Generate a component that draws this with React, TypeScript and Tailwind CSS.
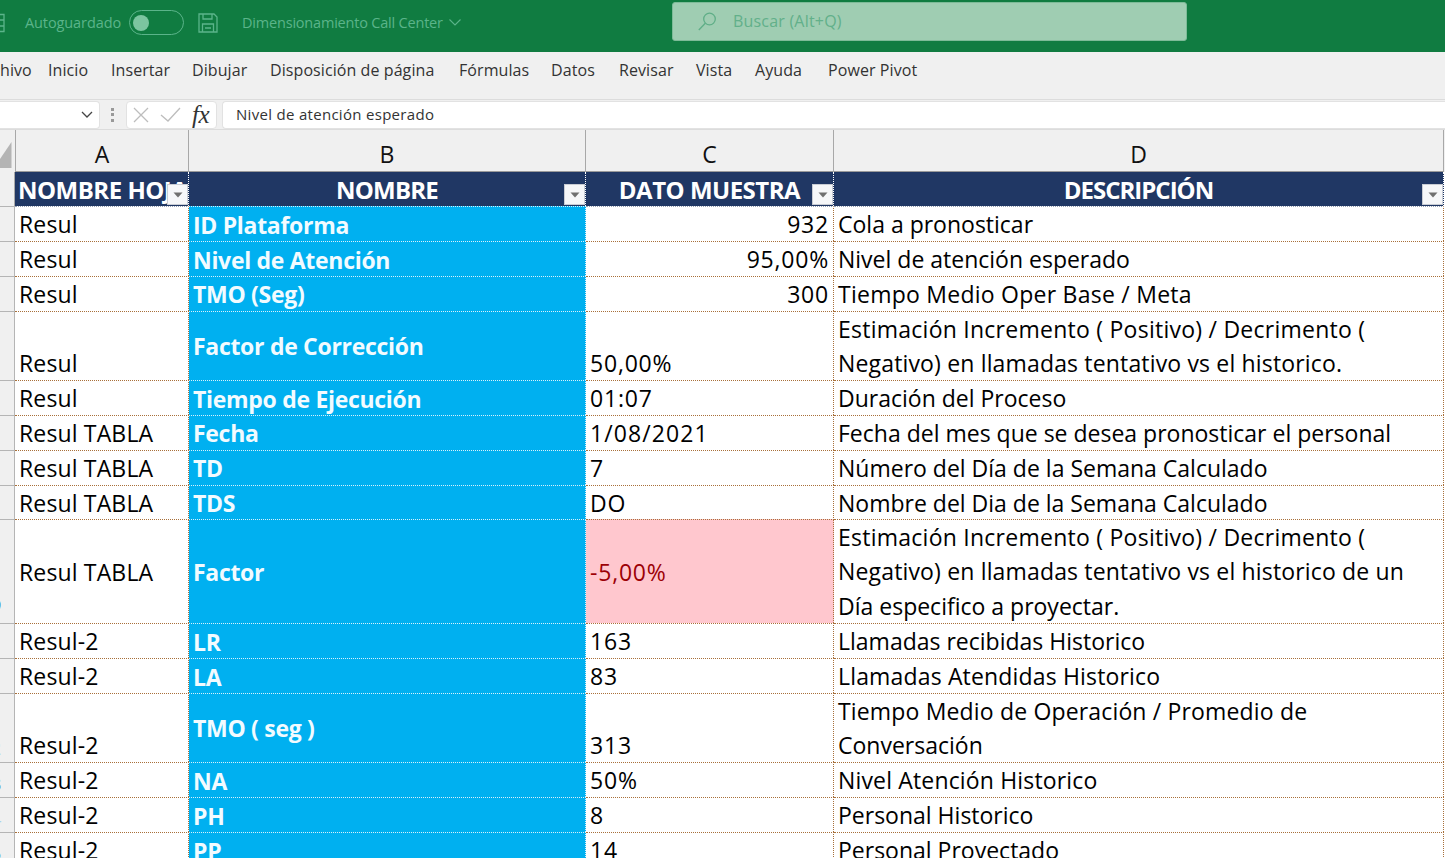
const CELL = "font-['Open_Sans',sans-serif] text-[23px] leading-[34px]";

type Line = [string, string?];
type Row = {
  h: string;
  a: string;
  aPos: string;
  b: string;
  bShift?: string;
  c: string;
  cPos: string;
  cTrack?: string;
  d: Line[];
  bg?: boolean;
  g?: string;
  gClass?: string;
};

const W1 = "tracking-[0.25px]";
const W2 = "tracking-[0.16px]";

const rows: Row[] = [
  { h: "h-[35px]", a: "Resul", aPos: "items-end", b: "ID Plataforma", c: "932", cPos: "items-end justify-end", d: [["Cola a pronosticar"]] },
  { h: "h-[35px]", a: "Resul", aPos: "items-end", b: "Nivel de Atención", c: "95,00%", cPos: "items-end justify-end", d: [["Nivel de atención esperado"]] },
  { h: "h-[35px]", a: "Resul", aPos: "items-end", b: "TMO (Seg)", bShift: "translate-y-0", c: "300", cPos: "items-end justify-end", d: [["Tiempo Medio Oper Base / Meta", W1]] },
  { h: "h-[69px]", a: "Resul", aPos: "items-end", b: "Factor de Corrección", bShift: "translate-y-0", c: "50,00%", cPos: "items-end", d: [["Estimación Incremento ( Positivo) / Decrimento (", W1], ["Negativo) en llamadas tentativo vs el historico.", W2]] },
  { h: "h-[35px]", a: "Resul", aPos: "items-end", b: "Tiempo de Ejecución", c: "01:07", cPos: "items-end", d: [["Duración del Proceso"]] },
  { h: "h-[35px]", a: "Resul TABLA", aPos: "items-end", b: "Fecha", bShift: "translate-y-0", c: "1/08/2021", cPos: "items-end", cTrack: "tracking-[1.1px]", d: [["Fecha del mes que se desea pronosticar el personal"]] },
  { h: "h-[35px]", a: "Resul TABLA", aPos: "items-end", b: "TD", bShift: "translate-y-0", c: "7", cPos: "items-end", d: [["Número del Día de la Semana Calculado"]] },
  { h: "h-[34px]", a: "Resul TABLA", aPos: "items-end", b: "TDS", bShift: "translate-y-0", c: "DO", cPos: "items-end", d: [["Nombre del Dia de la Semana Calculado"]] },
  { h: "h-[104px]", a: "Resul TABLA", aPos: "items-center", b: "Factor", bShift: "translate-y-0", c: "-5,00%", cPos: "items-center", bg: true, d: [["Estimación Incremento ( Positivo) / Decrimento (", W1], ["Negativo) en llamadas tentativo vs el historico de un", W2], ["Día especifico a proyectar."]], g: "9", gClass: "pb-[10px] text-[#1f5fa8]" },
  { h: "h-[35px]", a: "Resul-2", aPos: "items-end", b: "LR", c: "163", cPos: "items-end", d: [["Llamadas recibidas Historico"]] },
  { h: "h-[35px]", a: "Resul-2", aPos: "items-end", b: "LA", c: "83", cPos: "items-end", d: [["Llamadas Atendidas Historico", W2]], g: "1", gClass: "pb-[3px] text-[#1f3f70]" },
  { h: "h-[69px]", a: "Resul-2", aPos: "items-end", b: "TMO ( seg )", bShift: "translate-y-0", c: "313", cPos: "items-end", d: [["Tiempo Medio de Operación / Promedio de", W2], ["Conversación"]], g: "2", gClass: "pb-[6px] text-[#b5dcee]" },
  { h: "h-[35px]", a: "Resul-2", aPos: "items-end", b: "NA", c: "50%", cPos: "items-end", d: [["Nivel Atención Historico", W2]], g: "3", gClass: "pb-[5px] text-[#1f3f70]" },
  { h: "h-[35px]", a: "Resul-2", aPos: "items-end", b: "PH", c: "8", cPos: "items-end", d: [["Personal Historico"]], g: "4", gClass: "pb-[6px] text-[#a8d4ec]" },
  { h: "h-[35px]", a: "Resul-2", aPos: "items-end", b: "PP", c: "14", cPos: "items-end", d: [["Personal Proyectado"]], g: "5", gClass: "pb-[6px] text-[#4f8fc8]" },
];

const menu: [string, string][] = [
  ["Inicio", "w-[63px]"],
  ["Insertar", "w-[81px]"],
  ["Dibujar", "w-[78px]"],
  ["Disposición de página", "w-[189px]"],
  ["Fórmulas", "w-[92px]"],
  ["Datos", "w-[68px]"],
  ["Revisar", "w-[77px]"],
  ["Vista", "w-[59px]"],
  ["Ayuda", "w-[73px]"],
  ["Power Pivot", "w-[100px]"],
];

function FilterButton() {
  return (
    <div className="absolute right-0 bottom-[1px] flex h-[21px] w-[21px] items-center justify-center border border-[#c8ccd4] bg-[#f6f7f9]">
      <svg width="10" height="6" viewBox="0 0 10 6"><path d="M0.500 0.500h9L5 5.500z" fill="#707070" /></svg>
    </div>
  );
}

function HeaderCell({ label, align, track }: { label: string; align: string; track: string }) {
  return (
    <div className={`relative flex h-[34px] items-center overflow-hidden border-r border-dotted border-white bg-[#203764] ${align}`}>
      <span className={`translate-y-[1px] whitespace-nowrap font-['Open_Sans',sans-serif] text-[24px] font-bold leading-[34px] text-white ${track}`}>{label}</span>
      <FilterButton />
    </div>
  );
}

function ColHead({ label, border }: { label: string; border: string }) {
  return (
    <div className={`flex h-[42px] items-end justify-center border-b border-b-[#9a9a9a] pb-[1px] font-['Open_Sans',sans-serif] text-[23px] leading-[32px] text-[#111] ${border}`}>{label}</div>
  );
}

export default function App() {
  return (
    <div className="h-[858px] w-[1445px] overflow-hidden bg-white">
      {/* Title bar */}
      <div className="flex h-[52px] bg-[#107c41] font-['Open_Sans',sans-serif] text-[#5bb48a]">
        <div className="flex h-[45px] w-[672px] flex-none items-center">
          <svg width="5" height="20" viewBox="0 0 5 20" className="flex-none"><path d="M-3 1.500h7v17h-7M-3 7h7M-3 13h7" fill="none" stroke="#5bb48a" strokeWidth="1.3" /></svg>
          <span className="ml-[20px] text-[14.5px] tracking-[-0.1px]">Autoguardado</span>
          <div className="ml-[8px] flex h-[25px] w-[55px] items-center rounded-full border border-[#5bb48a] pl-[3px]">
            <div className="h-[16px] w-[16px] rounded-full bg-[#7cc5a0]" />
          </div>
          <svg width="20" height="20" viewBox="0 0 20 20" className="ml-[14px] flex-none" fill="none" stroke="#5bb48a" strokeWidth="1.3">
            <path d="M1 1h15l3 3v15H1z" />
            <path d="M5 1v5h9V1M4.500 19v-8h11v8M7 15h6" />
          </svg>
          <span className="ml-[24px] text-[14.5px] tracking-[-0.2px]">Dimensionamiento Call Center</span>
          <svg width="12" height="7" viewBox="0 0 12 7" className="ml-[6px]" fill="none" stroke="#5bb48a" strokeWidth="1.1"><path d="M0.500 0.500l5.500 5.500 5.500-5.500" /></svg>
        </div>
        <div className="mt-[2px] flex h-[39px] w-[515px] flex-none items-center rounded-[3px] border border-[#7dbb98] bg-[#9fcdb2] pl-[25px] text-[#62b08a]">
          <svg width="19" height="19" viewBox="0 0 19 19" fill="none" stroke="#5fae87" strokeWidth="1.3">
            <circle cx="11.500" cy="7" r="5.800" />
            <path d="M7.300 11.200L0.800 18" />
          </svg>
          <span className="-mt-[2px] ml-[16px] text-[16px] tracking-[0.2px]">Buscar (Alt+Q)</span>
        </div>
      </div>

      {/* Menu bar */}
      <div className="flex h-[47px] items-start overflow-hidden bg-[#f0f0f0] pt-[6px] font-['Open_Sans',sans-serif] text-[16px] leading-[24px] tracking-[0.08px] text-[#333]">
        <span className="w-[48px] flex-none whitespace-nowrap">
          <span className="inline-block">hivo</span>
        </span>
        {menu.map(([m, w]) => (
          <span key={m} className={`flex-none whitespace-nowrap ${w}`}>{m}</span>
        ))}
      </div>

      {/* Formula bar */}
      <div className="flex h-[31px] items-center border-y border-[#dcdcdc] bg-[#f0f0f0]">
        <div className="flex h-[28px] w-[100px] flex-none items-center justify-end rounded-r-[4px] border border-l-0 border-[#e2e2e2] bg-white pr-[6px]">
          <svg width="12" height="8" viewBox="0 0 12 8" fill="none" stroke="#444" strokeWidth="1.3"><path d="M1 1l5 5 5-5" /></svg>
        </div>
        <div className="ml-[11px] flex h-[14px] w-[4px] flex-none flex-col justify-between">
          <div className="h-[3px] w-[3px] bg-[#999]" />
          <div className="h-[3px] w-[3px] bg-[#999]" />
          <div className="h-[3px] w-[3px] bg-[#999]" />
        </div>
        <div className="ml-[11px] flex h-[28px] w-[91px] flex-none items-center rounded-[4px] border border-[#e2e2e2] bg-white">
          <svg width="16" height="16" viewBox="0 0 16 16" className="ml-[6px] flex-none" fill="none" stroke="#bdbdbd" strokeWidth="1.3"><path d="M1 1l14 14M15 1L1 15" /></svg>
          <svg width="21" height="15" viewBox="0 0 21 15" className="ml-[11px] flex-none" fill="none" stroke="#bdbdbd" strokeWidth="1.3"><path d="M1 8l7 6L20 1" /></svg>
          <span className="ml-[11px] font-['Liberation_Serif',serif] text-[25px] italic leading-[20px] tracking-[-0.5px] text-[#333]">fx</span>
        </div>
        <div className="ml-[5px] flex h-[28px] flex-1 items-center rounded-l-[4px] border border-r-0 border-[#e2e2e2] bg-white pl-[13px] font-['Open_Sans',sans-serif] text-[15px] tracking-[0.3px] text-[#333]">Nivel de atención esperado</div>
      </div>

      {/* Column letters */}
      <div className="grid grid-cols-[15px_174px_397px_248px_610px] bg-[#f0f0f0]">
        <div className="flex h-[42px] items-start pt-[12px]">
          <svg width="12" height="26" viewBox="0 0 12 26"><path d="M11.500 0v26H0v-9z" fill="#b4b4b4" /></svg>
        </div>
        <ColHead label="A" border="border-l border-r border-[#a8a8a8]" />
        <ColHead label="B" border="border-r border-[#a8a8a8]" />
        <ColHead label="C" border="border-r border-[#a8a8a8]" />
        <ColHead label="D" border="border-r border-[#a8a8a8]" />
      </div>

      {/* Table header */}
      <div className="grid grid-cols-[15px_174px_397px_248px_610px]">
        <div className="h-[34px] border-r border-[#a8a8a8] bg-[#f0f0f0]" />
        <HeaderCell label="NOMBRE HOJA" align="pl-[3px]" track="tracking-[-0.5px]" />
        <HeaderCell label="NOMBRE" align="justify-center" track="tracking-[-0.8px]" />
        <HeaderCell label="DATO MUESTRA" align="justify-center" track="tracking-[-0.5px]" />
        <HeaderCell label="DESCRIPCIÓN" align="justify-center" track="tracking-[-1px]" />
      </div>

      {/* Rows */}
      {rows.map((r, i) => (
        <div key={i} className={`grid grid-cols-[15px_174px_397px_248px_610px] ${r.h} text-black ${CELL}`}>
          <div className={`flex items-end overflow-hidden border-t border-r border-[#b5b5b5] bg-[#f0f0f0] font-['Open_Sans',sans-serif] text-[18px] leading-[16px] ${r.gClass ?? ""}`}>
            {r.g ? <span className="-ml-[9px]">{r.g}</span> : null}
          </div>
          <div className={`flex overflow-hidden whitespace-nowrap border-t border-r border-r-[#a8703a] border-dotted pl-[4px] tracking-[0.15px] ${i === 0 ? "border-t-[#9aa4b5]" : "border-t-[#a8703a]"} ${r.aPos}`}>{r.a}</div>
          <div className="flex items-center whitespace-nowrap border-t border-r border-dotted border-[#d8f1fb] bg-[#00b0f0] pl-[4px] font-bold tracking-[-0.3px] text-[#f2fbff]">
            <span className={r.bShift ?? "translate-y-[1px]"}>{r.b}</span>
          </div>
          <div className={`flex whitespace-nowrap border-t border-r border-r-[#a8703a] border-dotted px-[4px] ${i === 0 ? "border-t-[#9aa4b5]" : "border-t-[#a8703a]"} ${r.cTrack ?? "tracking-[0.8px]"} ${r.cPos} ${r.bg ? "bg-[#ffc7ce] text-[#9c0006]" : ""}`}>{r.c}</div>
          <div className={`flex flex-col justify-end overflow-hidden whitespace-nowrap border-t border-r border-r-[#a8703a] border-dotted pl-[4px] ${i === 0 ? "border-t-[#9aa4b5]" : "border-t-[#a8703a]"}`}>
            {r.d.map(([l, t]) => (
              <div key={l} className={`h-[34.5px] ${t ?? ""}`}>{l}</div>
            ))}
          </div>
        </div>
      ))}
    </div>
  );
}
